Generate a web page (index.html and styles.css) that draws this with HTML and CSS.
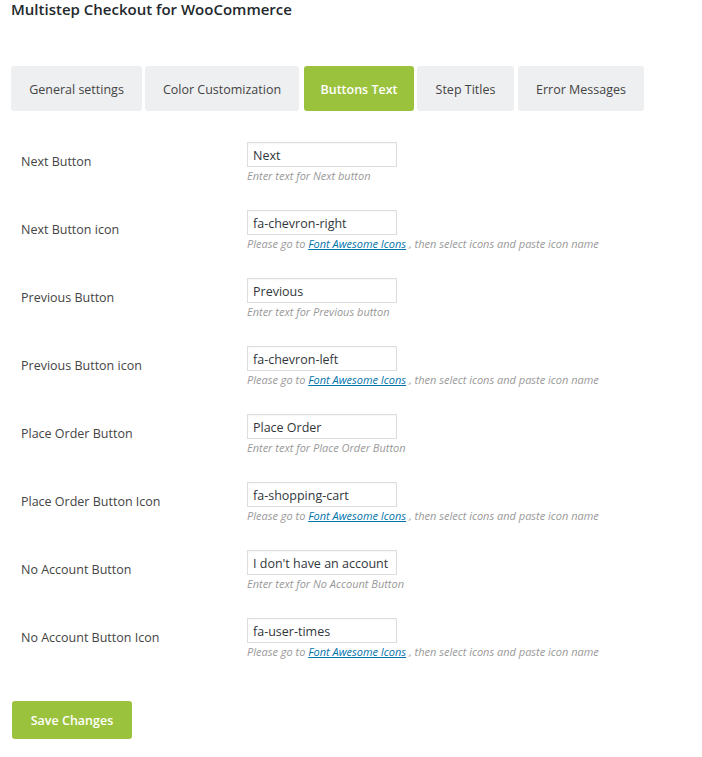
FILE: index.html
```html
<!DOCTYPE html>
<html>
<head>
<meta charset="utf-8">
<link rel="stylesheet" href="styles.css">
</head>
<body>
<div class="wrap">
  <h1 class="title">Multistep Checkout for WooCommerce</h1>
  <nav class="tabs">
    <a class="tab">General settings</a>
    <a class="tab">Color Customization</a>
    <a class="tab active">Buttons Text</a>
    <a class="tab">Step Titles</a>
    <a class="tab">Error Messages</a>
  </nav>
  <div class="form">
    <div class="row">
      <div class="label">Next Button</div>
      <div class="field"><input class="input" value="Next"><p class="desc">Enter text for Next button</p></div>
    </div>
    <div class="row">
      <div class="label">Next Button icon</div>
      <div class="field"><input class="input" value="fa-chevron-right"><p class="desc">Please go to <a class="link">Font Awesome Icons</a> , then select icons and paste icon name</p></div>
    </div>
    <div class="row">
      <div class="label">Previous Button</div>
      <div class="field"><input class="input" value="Previous"><p class="desc">Enter text for Previous button</p></div>
    </div>
    <div class="row">
      <div class="label">Previous Button icon</div>
      <div class="field"><input class="input" value="fa-chevron-left"><p class="desc">Please go to <a class="link">Font Awesome Icons</a> , then select icons and paste icon name</p></div>
    </div>
    <div class="row">
      <div class="label">Place Order Button</div>
      <div class="field"><input class="input" value="Place Order"><p class="desc">Enter text for Place Order Button</p></div>
    </div>
    <div class="row">
      <div class="label">Place Order Button Icon</div>
      <div class="field"><input class="input" value="fa-shopping-cart"><p class="desc">Please go to <a class="link">Font Awesome Icons</a> , then select icons and paste icon name</p></div>
    </div>
    <div class="row">
      <div class="label">No Account Button</div>
      <div class="field"><input class="input" value="I don't have an account"><p class="desc">Enter text for No Account Button</p></div>
    </div>
    <div class="row">
      <div class="label">No Account Button Icon</div>
      <div class="field"><input class="input" value="fa-user-times"><p class="desc">Please go to <a class="link">Font Awesome Icons</a> , then select icons and paste icon name</p></div>
    </div>
  </div>
  <button class="save">Save Changes</button>
</div>
</body>
</html>
```
FILE: styles.css
```css
html, body {
  margin: 0;
  padding: 0;
  background: #ffffff;
}
body {
  font-family: "Open Sans", "Noto Sans", sans-serif;
  font-size: 12px;
  color: #444;
}
.wrap {
  padding-left: 11px;
  width: 633px;
}
.title {
  margin: 0;
  font-size: 15px;
  font-weight: 600;
  line-height: 18px;
  color: #23282d;
  height: 19px;
}
.tabs {
  display: flex;
  gap: 3px;
  margin-top: 47px;
  height: 45px;
}
.tab {
  display: flex;
  align-items: center;
  justify-content: center;
  background: #eeeff1;
  border-radius: 3px;
  color: #444;
  font-size: 12.5px;
  padding: 2px 0 0;
  white-space: nowrap;
  height: 45px;
  box-sizing: border-box;
}
.tab:nth-child(1) { width: 131px; }
.tab:nth-child(2) { width: 154px; }
.tab:nth-child(3) { width: 110px; margin-left: 2px; }
.tab:nth-child(4) { width: 97px; }
.tab:nth-child(5) { width: 126px; margin-left: 1px; }
.tab.active {
  background: #9bc23d;
  color: #fff;
  font-weight: 600;
}
.form {
  padding-top: 16px;
}
.row {
  display: grid;
  grid-template-columns: 236px 1fr;
  height: 68px;
  padding-top: 15px;
  box-sizing: border-box;
}
.label {
  padding-left: 10px;
  padding-top: 11px;
  line-height: 18px;
  color: #444;
  font-size: 12.5px;
}
.field {
  display: flex;
  flex-direction: column;
  align-items: flex-start;
}
.input {
  width: 150px;
  height: 25px;
  box-sizing: border-box;
  border: 1px solid #ddd;
  border-radius: 0;
  padding: 2px 5px 0;
  font-family: "Open Sans", "Noto Sans", sans-serif;
  font-size: 12.5px;
  color: #32373c;
  box-shadow: inset 0 1px 2px rgba(0,0,0,0.04);
  margin: 0;
  outline: none;
}
.desc {
  margin: 1px 0 0;
  font-size: 11px;
  font-style: italic;
  color: #999;
  line-height: 16px;
  white-space: nowrap;
}
.link {
  color: #0073aa;
  text-decoration: underline;
}
.save {
  margin-top: 30px;
  margin-left: 1px;
  width: 120px;
  height: 38px;
  background: #9bc23d;
  border: none;
  border-radius: 3px;
  color: #fff;
  font-family: "Open Sans", "Noto Sans", sans-serif;
  font-size: 12.5px;
  font-weight: 600;
  padding: 0;
}
```
